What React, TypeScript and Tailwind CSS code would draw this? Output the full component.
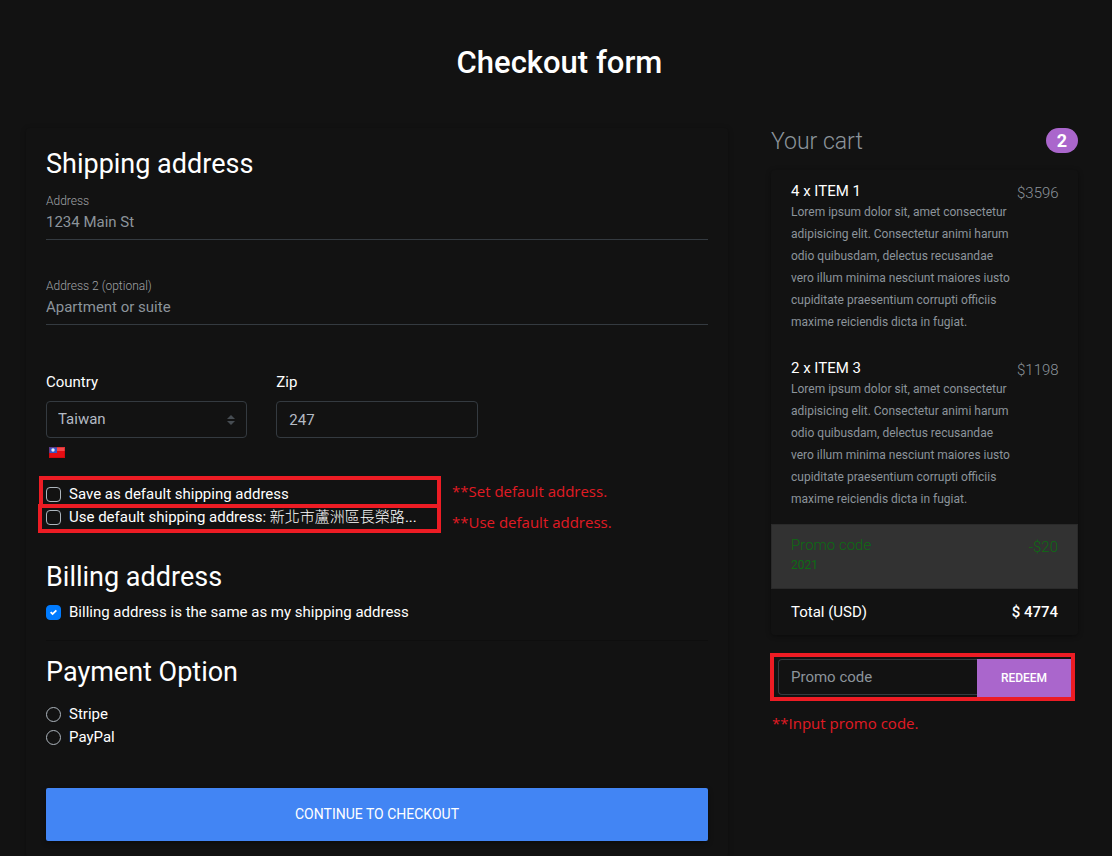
import React from "react";

const LOREM =
  "Lorem ipsum dolor sit, amet consectetur adipisicing elit. Consectetur animi harum odio quibusdam, delectus recusandae vero illum minima nesciunt maiores iusto cupiditate praesentium corrupti officiis maxime reiciendis dicta in fugiat.";

const NOTE =
  "absolute whitespace-nowrap font-['Open_Sans','Noto_Sans',sans-serif] text-[15px]/6 text-[#e01b24]";

function TextField({ id, label, placeholder }: { id: string; label: string; placeholder: string }) {
  return (
    <div className="flex flex-col">
      <label htmlFor={id} className="text-xs/4 font-light text-[#a0a3a6]">
        {label}
      </label>
      <input
        id={id}
        placeholder={placeholder}
        className="h-[31px] w-full border-b border-[#343a40] bg-transparent pb-[5px] text-[15px] outline-none placeholder:text-[#8c949b] placeholder:opacity-100"
      />
    </div>
  );
}

function Choice({
  id,
  type,
  name,
  checked,
  children,
}: {
  id: string;
  type: "checkbox" | "radio";
  name?: string;
  checked?: boolean;
  children: React.ReactNode;
}) {
  const shape = type === "radio" ? "rounded-full" : "rounded";
  return (
    <div className="flex h-[23px] items-center gap-2">
      <span className="relative flex size-[15px] shrink-0">
        <input
          id={id}
          type={type}
          name={name}
          defaultChecked={checked}
          className={`peer size-[15px] appearance-none border border-[#adb5bd] checked:border-[#007bff] checked:bg-[#007bff] ${shape}`}
        />
        <svg
          viewBox="0 0 8 8"
          className="pointer-events-none absolute top-1 left-1 hidden size-[7px] peer-checked:block"
          aria-hidden="true"
        >
          <path fill="#fff" d="M6.564.75l-3.59 3.612-1.538-1.55L0 4.26 2.974 7.25 8 2.193z" />
        </svg>
      </span>
      <label htmlFor={id} className="whitespace-nowrap">
        {children}
      </label>
    </div>
  );
}

function CartItem({ title, price }: { title: string; price: string }) {
  return (
    <li className="flex items-start justify-between px-5 pt-3 pb-[14px]">
      <div className="w-[226px] shrink-0">
        <h6 className="text-[15px]/[19px]">{title}</h6>
        <p className="text-xs/[22px] text-[#8c949b]">{LOREM}</p>
      </div>
      <span className="text-[15px]/[22px] font-light text-[#8c949b]">{price}</span>
    </li>
  );
}

function Flag() {
  return (
    <svg viewBox="0 0 16 11" className="ml-[3px] h-[11px] w-4" role="img" aria-label="Taiwan">
      <rect width="16" height="11" fill="#e60d13" />
      <rect width="16" height="4" fill="#f5474a" />
      <rect width="8" height="6" fill="#3b56c4" />
      <circle cx="4" cy="3" r="1.7" fill="#e8eefc" />
      <rect x="0.5" y="0.5" width="15" height="10" fill="none" stroke="#a00" strokeOpacity="0.3" />
    </svg>
  );
}

export default function App() {
  return (
    <main className="min-h-screen bg-[#121212] pt-[45px] pr-[19px] pl-[26px] font-[Roboto,'Noto_Sans_CJK_TC',sans-serif] text-[15px] text-white">
      <h1 className="text-center text-[31px]/9 font-medium">Checkout form</h1>

      <div className="mt-[47px] grid grid-cols-[minmax(0,702fr)_minmax(0,322fr)] items-start gap-[43px]">
        <form className="rounded px-5 pt-[19px] pb-4 shadow-[0_1px_5px_rgba(0,0,0,0.35)]">
          <h2 className="text-[27px]/[34px]">Shipping address</h2>
          <div className="mt-3 flex flex-col gap-[38px]">
            <TextField id="address" label="Address" placeholder="1234 Main St" />
            <TextField id="address2" label="Address 2 (optional)" placeholder="Apartment or suite" />
          </div>

          <div className="mt-[46px] grid grid-cols-3 gap-[29px]">
            <div>
              <label htmlFor="country" className="block leading-[22px]">
                Country
              </label>
              <div className="relative mt-2">
                <select
                  id="country"
                  className="h-[37px] w-full appearance-none rounded border border-[#343a40] bg-transparent px-[11px] text-[#b4bac4] outline-none"
                >
                  <option>Taiwan</option>
                </select>
                <svg
                  viewBox="0 0 8 10"
                  className="pointer-events-none absolute top-[14px] right-3 h-[10px] w-2"
                  aria-hidden="true"
                >
                  <path fill="#464c52" d="M4 0L0 4h8zM4 10L0 6h8z" />
                </svg>
              </div>
            </div>
            <div>
              <label htmlFor="zip" className="block leading-[22px]">
                Zip
              </label>
              <input
                id="zip"
                defaultValue="247"
                className="mt-2 block h-[37px] w-full rounded border border-[#343a40] bg-transparent px-3 text-[#b4bac4] outline-none"
              />
            </div>
          </div>
          <div className="mt-[9px]">
            <Flag />
          </div>

          <div className="relative mt-[25px]">
            <Choice id="save" type="checkbox">
              Save as default shipping address
            </Choice>
            <Choice id="use" type="checkbox">
              Use default shipping address: <span className="font-light">新北市蘆洲區長榮路</span>...
            </Choice>
            <div className="pointer-events-none absolute -top-[7px] -left-[7px] h-[32px] w-[402px] border-4 border-[#ed1c24]" />
            <div className="pointer-events-none absolute top-[21px] -left-2 h-[29px] w-[403px] border-4 border-[#ed1c24]" />
            <p className={`${NOTE} -top-1 left-[406px]`}>**Set default address.</p>
            <p className={`${NOTE} top-[27px] left-[406px]`}>**Use default address.</p>
          </div>

          <h2 className="mt-[31px] text-[27px]/[34px]">Billing address</h2>
          <div className="mt-[7px]">
            <Choice id="same" type="checkbox" checked>
              Billing address is the same as my shipping address
            </Choice>
          </div>
          <hr className="mt-4 border-[#0e0e0e]" />

          <h2 className="mt-[14px] text-[27px]/[34px]">Payment Option</h2>
          <div className="mt-[14px]">
            <Choice id="stripe" type="radio" name="payment">
              Stripe
            </Choice>
            <Choice id="paypal" type="radio" name="payment">
              PayPal
            </Choice>
          </div>

          <button
            type="submit"
            className="mt-[39px] h-[53px] w-full rounded-xs bg-[#4285f4] text-[14px] shadow-[0_2px_5px_rgba(0,0,0,0.4)]"
          >
            CONTINUE TO CHECKOUT
          </button>
        </form>

        <aside className="pr-[15px]">
          <h4 className="flex items-start justify-between text-[23px]/7 font-light text-[#8c949b]">
            <span>Your cart</span>
            <span className="flex h-[25px] w-8 items-center justify-center rounded-full bg-[#aa66cc] text-lg/none font-bold text-white">
              2
            </span>
          </h4>

          <ul className="mt-[14px] rounded shadow-[0_1px_5px_rgba(0,0,0,0.4)]">
            <CartItem title="4 x ITEM 1" price="$3596" />
            <CartItem title="2 x ITEM 3" price="$1198" />
            <li className="flex items-start justify-between border border-[#2a2a2a] bg-[#323232] px-[19px] pt-[11px] pb-3 text-[#0c6c12]">
              <div>
                <h6 className="text-[15px]/[19px] font-light">Promo code</h6>
                <p className="text-xs/[21px]">2021</p>
              </div>
              <span className="text-[15px]/[22px] font-light">-$20</span>
            </li>
            <li className="flex justify-between px-5 pt-3 pb-3 leading-[22px]">
              <span>Total (USD)</span>
              <strong className="font-medium">$ 4774</strong>
            </li>
          </ul>

          <form className="relative mt-6 flex items-start px-[7px]">
            <input
              aria-label="Promo code"
              placeholder="Promo code"
              className="h-9 min-w-0 flex-1 rounded-l border border-r-0 border-[#343a40] bg-transparent px-3 outline-none placeholder:text-[#8c949b] placeholder:opacity-100"
            />
            <button type="submit" className="h-[38px] w-[94px] bg-[#aa66cc] text-xs font-medium">
              REDEEM
            </button>
            <div className="pointer-events-none absolute -top-[6px] right-[3px] -left-px h-12 border-4 border-[#ed1c24]" />
            <p className={`${NOTE} top-[52px] left-px`}>**Input promo code.</p>
          </form>
        </aside>
      </div>
    </main>
  );
}
